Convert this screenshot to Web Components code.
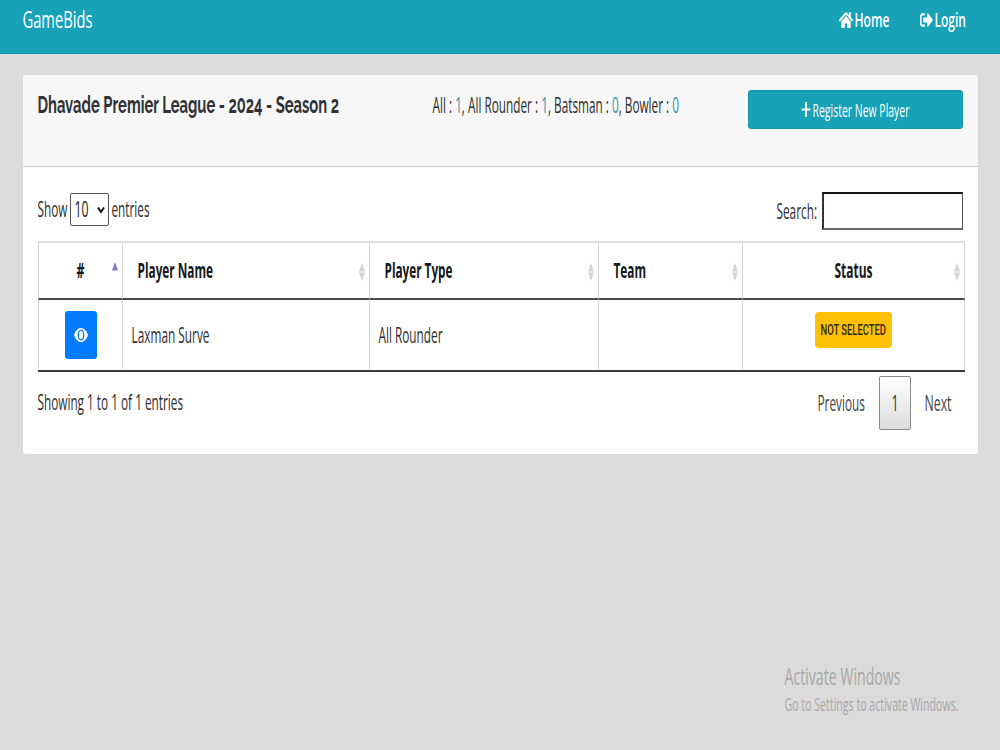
<!DOCTYPE html>
<html lang="en">
<head>
<meta charset="utf-8">
<title>GameBids</title>
<style>
   body {
      margin: 0;
      width: 1000px;
      height: 750px;
      overflow: hidden;
      display: flex;
      flex-direction: column;
      background: #dbdbdb;
      color: #2e2e2e;
      font: 21px/28px "Open Sans", "Noto Sans", sans-serif;
   }
   .count { color: #2f93aa; }
</style>
</head>
<body>
   <nav-bar></nav-bar>
   <player-card>
      <fit-text slot="title" width="301.500">Dhavade Premier League - 2024 - Season 2</fit-text>
      <fit-text slot="stats" width="246.500">All : <span class="count">1</span>, All Rounder : <span class="count">1</span>, Batsman : <span class="count">0</span>, Bowler : <span class="count">0</span></fit-text>
      <table-tools></table-tools>
      <player-table></player-table>
      <table-pager></table-pager>
   </player-card>
   <system-note></system-note>

<script>
class NavBar extends HTMLElement {
   constructor () {
      super();
      this.attachShadow({ mode: 'open' })
      this.shadowRoot.innerHTML = `
      <style>
      :host {
         display: flex;
         flex: none;
         box-sizing: border-box;
         height: 54px;
         padding: 5px 33.500px 0 23px;
         background: #17a2b8;
         border-bottom: 1px solid #1795a9;
         color: #fff;
      }
      .brand {
         font-size: 24px;
         font-weight: 500;
         margin-right: auto;
      }
      .link {
         display: flex;
         height: 30px;
         margin-left: 30px;
         font-size: 20.5px;
         font-weight: 600;
      }
      svg { margin-top: 6px; fill: #fff; }
      </style>
      <fit-text class="brand" width="70">GameBids</fit-text>
      <div class="link">
         <svg width="14" height="18" viewBox="0 0 576 512" preserveAspectRatio="none" style="margin-right:2px"><path d="M280 148 96 300v164a16 16 0 0 0 16 16h112a16 16 0 0 0 16-16v-96a16 16 0 0 1 16-16h64a16 16 0 0 1 16 16v96a16 16 0 0 0 16 16h112a16 16 0 0 0 16-16V300L296 148a12 12 0 0 0-16 0zM571 251l-83-69V44a12 12 0 0 0-12-12h-56a12 12 0 0 0-12 12v72l-90-74a48 48 0 0 0-61 0L4 251a12 12 0 0 0-1 17l25 31a12 12 0 0 0 17 2L280 107a12 12 0 0 1 16 0l235 194a12 12 0 0 0 17-2l25-31a12 12 0 0 0-2-17z"/></svg>
         <fit-text width="35">Home</fit-text>
      </div>
      <div class="link">
         <svg width="13" height="18" viewBox="0 0 512 512" preserveAspectRatio="none" style="margin-right:2px"><path d="M497 273 329 441c-15 15-41 4.500-41-17v-96H152c-13 0-24-11-24-24v-96c0-13 11-24 24-24h136V88c0-21 26-32 41-17l168 168c9 9 9 25 0 34zM192 436v-40c0-7-5-12-12-12H96c-18 0-32-14-32-32V160c0-18 14-32 32-32h84c7 0 12-5 12-12V76c0-7-5-12-12-12H96C43 64 0 107 0 160v192c0 53 43 96 96 96h84c7 0 12-5 12-12z"/></svg>
         <fit-text width="31.500">Login</fit-text>
      </div>
      `;
   }
}

class PlayerCard extends HTMLElement {
   constructor () {
      super();
      this.attachShadow({ mode: 'open' })
      this.shadowRoot.innerHTML = `
      <style>
      :host {
         display: block;
         flex: none;
         box-sizing: border-box;
         width: 955px;
         height: 379px;
         margin: 21px 0 0 23px;
         background: #fff;
         border-radius: 3px;
         overflow: hidden;
      }
      header {
         display: flex;
         box-sizing: border-box;
         height: 92px;
         padding: 15px;
         background: #f7f7f7;
         border-bottom: 1px solid #c9c9c9;
      }
      .title {
         width: 395px;
         padding-top: 1px;
         font: 700 24.5px/28px Raleway, Lato, "Open Sans", sans-serif;
         font-feature-settings: "onum";
         color: #303236;
      }
      .stats { flex: 1; padding-top: 1px; }
      .register {
         display: flex;
         justify-content: center;
         box-sizing: border-box;
         width: 215px;
         height: 39px;
         padding-top: 5px;
         background: #17a2b8;
         border: 1px solid #1a96aa;
         border-radius: 3px;
         color: #fff;
         font-size: 18px;
      }
      svg { margin: 5px 2px 0 0; }
      </style>
      <header>
         <div class="title"><slot name="title"></slot></div>
         <div class="stats"><slot name="stats"></slot></div>
         <div class="register">
            <svg width="10" height="17" viewBox="0 0 10 17"><path d="M5 1v15M.5 8.500h9" stroke="#fff" stroke-width="2"/></svg>
            <fit-text width="97">Register New Player</fit-text>
         </div>
      </header>
      <slot></slot>
      `;
   }
}

class TableTools extends HTMLElement {
   constructor () {
      super();
      this.attachShadow({ mode: 'open' })
      this.shadowRoot.innerHTML = `
      <style>
      :host {
         display: flex;
         justify-content: space-between;
         height: 74px;
         padding: 0 15px;
      }
      .length, .search { display: flex; }
      .length { padding-top: 28px; }
      .select {
         display: flex;
         justify-content: space-between;
         box-sizing: border-box;
         width: 39px;
         height: 33px;
         margin: -2px 3px 0 2px;
         padding: 0 3px 0 4px;
         border: 1px solid #555;
         border-radius: 2px;
         color: #222;
      }
      .select fit-text { margin-top: 1px; }
      .select svg { margin-top: 12px; }
      .search { padding-top: 25px; }
      .search fit-text { margin-top: 5px; }
      .input {
         box-sizing: border-box;
         width: 141px;
         height: 38px;
         margin-left: 5px;
         border: 1px solid #333;
         border-width: 2px 1px 2px 2px;
         border-color: #151515 #555 #666 #333;
      }
      </style>
      <div class="length">
         <fit-text width="30">Show</fit-text>
         <div class="select">
            <fit-text width="14">10</fit-text>
            <svg width="8" height="8" viewBox="0 0 8 8"><path d="M1 1.500 4 6l3-4.500" fill="none" stroke="#111" stroke-width="2"/></svg>
         </div>
         <fit-text width="38">entries</fit-text>
      </div>
      <div class="search">
         <fit-text width="40.500">Search:</fit-text>
         <div class="input"></div>
      </div>
      `;
   }
}

class SortArrows extends HTMLElement {
   constructor () {
      super();
      this.attachShadow({ mode: 'open' })
      const up = this.hasAttribute('active') ? '#7d78c0' : '#d4d4d4';
      const down = this.hasAttribute('active') ? 'none' : '#d4d4d4';
      this.shadowRoot.innerHTML = `
      <style>
      :host { display: block; width: 6px; height: 18px; }
      svg { display: block; }
      </style>
      <svg width="6" height="18" viewBox="0 0 6 18">
         <path d="M3 0 6 8.500H0z" fill="${up}"/>
         <path d="M0 9.500h6L3 18z" fill="${down}"/>
      </svg>
      `;
   }
}

class PlayerTable extends HTMLElement {
   constructor () {
      super();
      this.attachShadow({ mode: 'open' })
      this.shadowRoot.innerHTML = `
      <style>
      :host {
         display: block;
         box-sizing: border-box;
         width: 927px;
         height: 131px;
         margin-left: 15px;
         border-top: 2px solid #dee0e2;
         border-bottom: 2px solid #3c3c40;
      }
      .row {
         display: grid;
         grid-template-columns: 85px 247px 229px 144px 222px;
      }
      .row > div {
         display: flex;
         box-sizing: border-box;
         border-right: 1px solid #d3d5d8;
      }
      .row > div:first-child { border-left: 1px solid #d3d5d8; }
      .head > div {
         justify-content: space-between;
         height: 57px;
         padding: 13px 4px 0 14.500px;
         border-bottom: 2px solid #4a4a4e;
         color: #16181b;
         font-size: 20.5px;
         font-weight: 700;
      }
      .head sort-arrows { margin-top: 7px; }
      .body > div { height: 69px; padding: 21px 8px 0 8.500px; }
      .body > .mid { justify-content: center; }
      .view {
         display: flex;
         align-items: center;
         justify-content: center;
         width: 32px;
         height: 48px;
         margin-top: -10px;
         background: #007bff;
         border-radius: 3px;
      }
      .badge {
         box-sizing: border-box;
         width: 77px;
         height: 36px;
         margin-top: -9px;
         padding: 4px 0 0 6px;
         background: #ffc107;
         border-radius: 4px;
         color: #33291a;
         font: 500 15.5px/28px Roboto, "Open Sans", sans-serif;
      }
      </style>
      <div class="row head">
         <div style="padding-left:38px"><fit-text width="8">#</fit-text><sort-arrows active style="margin-top:6px"></sort-arrows></div>
         <div><fit-text width="75.500">Player Name</fit-text><sort-arrows></sort-arrows></div>
         <div><fit-text width="68">Player Type</fit-text><sort-arrows></sort-arrows></div>
         <div><fit-text width="32.500">Team</fit-text><sort-arrows></sort-arrows></div>
         <div style="padding-left:92px"><fit-text width="38">Status</fit-text><sort-arrows></sort-arrows></div>
      </div>
      <div class="row body">
         <div class="mid">
            <div class="view">
               <svg width="14" height="16" viewBox="0 0 14 16">
                  <path d="M0 8C3-1.500 11-1.500 14 8 11 17.500 3 17.500 0 8z" fill="#fff"/>
                  <ellipse cx="7" cy="8" rx="2.700" ry="4.900" fill="none" stroke="#007bff" stroke-width="1.300"/>
               </svg>
            </div>
         </div>
         <div><fit-text width="78">Laxman Surve</fit-text></div>
         <div><fit-text width="64">All Rounder</fit-text></div>
         <div></div>
         <div class="mid"><div class="badge"><fit-text width="65.500">NOT SELECTED</fit-text></div></div>
      </div>
      `;
   }
}

class TablePager extends HTMLElement {
   constructor () {
      super();
      this.attachShadow({ mode: 'open' })
      this.shadowRoot.innerHTML = `
      <style>
      :host {
         display: flex;
         padding: 4px 26px 0 15px;
      }
      .info { margin: 12px auto 0 0; }
      .step { margin-top: 13px; color: #444; }
      .page {
         display: flex;
         justify-content: center;
         box-sizing: border-box;
         width: 32px;
         height: 54px;
         margin: 0 14px;
         padding-top: 12px;
         border: 1px solid #888;
         border-radius: 2px;
         background: linear-gradient(#fff, #dcdcdc);
      }
      </style>
      <fit-text class="info" width="145.500">Showing 1 to 1 of 1 entries</fit-text>
      <fit-text class="step" width="47.500">Previous</fit-text>
      <div class="page"><fit-text width="7">1</fit-text></div>
      <fit-text class="step" width="27">Next</fit-text>
      `;
   }
}

class SystemNote extends HTMLElement {
   constructor () {
      super();
      this.attachShadow({ mode: 'open' })
      this.shadowRoot.innerHTML = `
      <style>
      :host {
         display: flex;
         flex-direction: column;
         margin: auto 0 32px 785px;
         color: #a8a8a8;
      }
      .big { font-size: 23px; }
      .small { font-size: 19px; }
      </style>
      <fit-text class="big" width="116">Activate Windows</fit-text>
      <fit-text class="small" width="174">Go to Settings to activate Windows.</fit-text>
      `;
   }
}

// text squeezed horizontally to the given width
class FitText extends HTMLElement {
   constructor () {
      super();
      this.attachShadow({ mode: 'open' })
      this.shadowRoot.innerHTML = `
      <style>
      :host { display: block; flex: none; white-space: nowrap; height: 28px; }
      span { display: block; width: max-content; transform-origin: 0 50%; }
      </style>
      <span><slot></slot></span>
      `;
   }

   connectedCallback() {
      const width = parseFloat(this.getAttribute('width'));
      const span = this.shadowRoot.querySelector('span');
      this.style.width = width + 'px';
      span.style.transform = `translateX(-.5px) scaleX(${width / span.getBoundingClientRect().width})`;
   }
}

customElements.define('nav-bar', NavBar);
customElements.define('player-card', PlayerCard);
customElements.define('table-tools', TableTools);
customElements.define('sort-arrows', SortArrows);
customElements.define('player-table', PlayerTable);
customElements.define('table-pager', TablePager);
customElements.define('system-note', SystemNote);
// last, so that every text already has its final font when it is measured
customElements.define('fit-text', FitText);
</script>
</body>
</html>
